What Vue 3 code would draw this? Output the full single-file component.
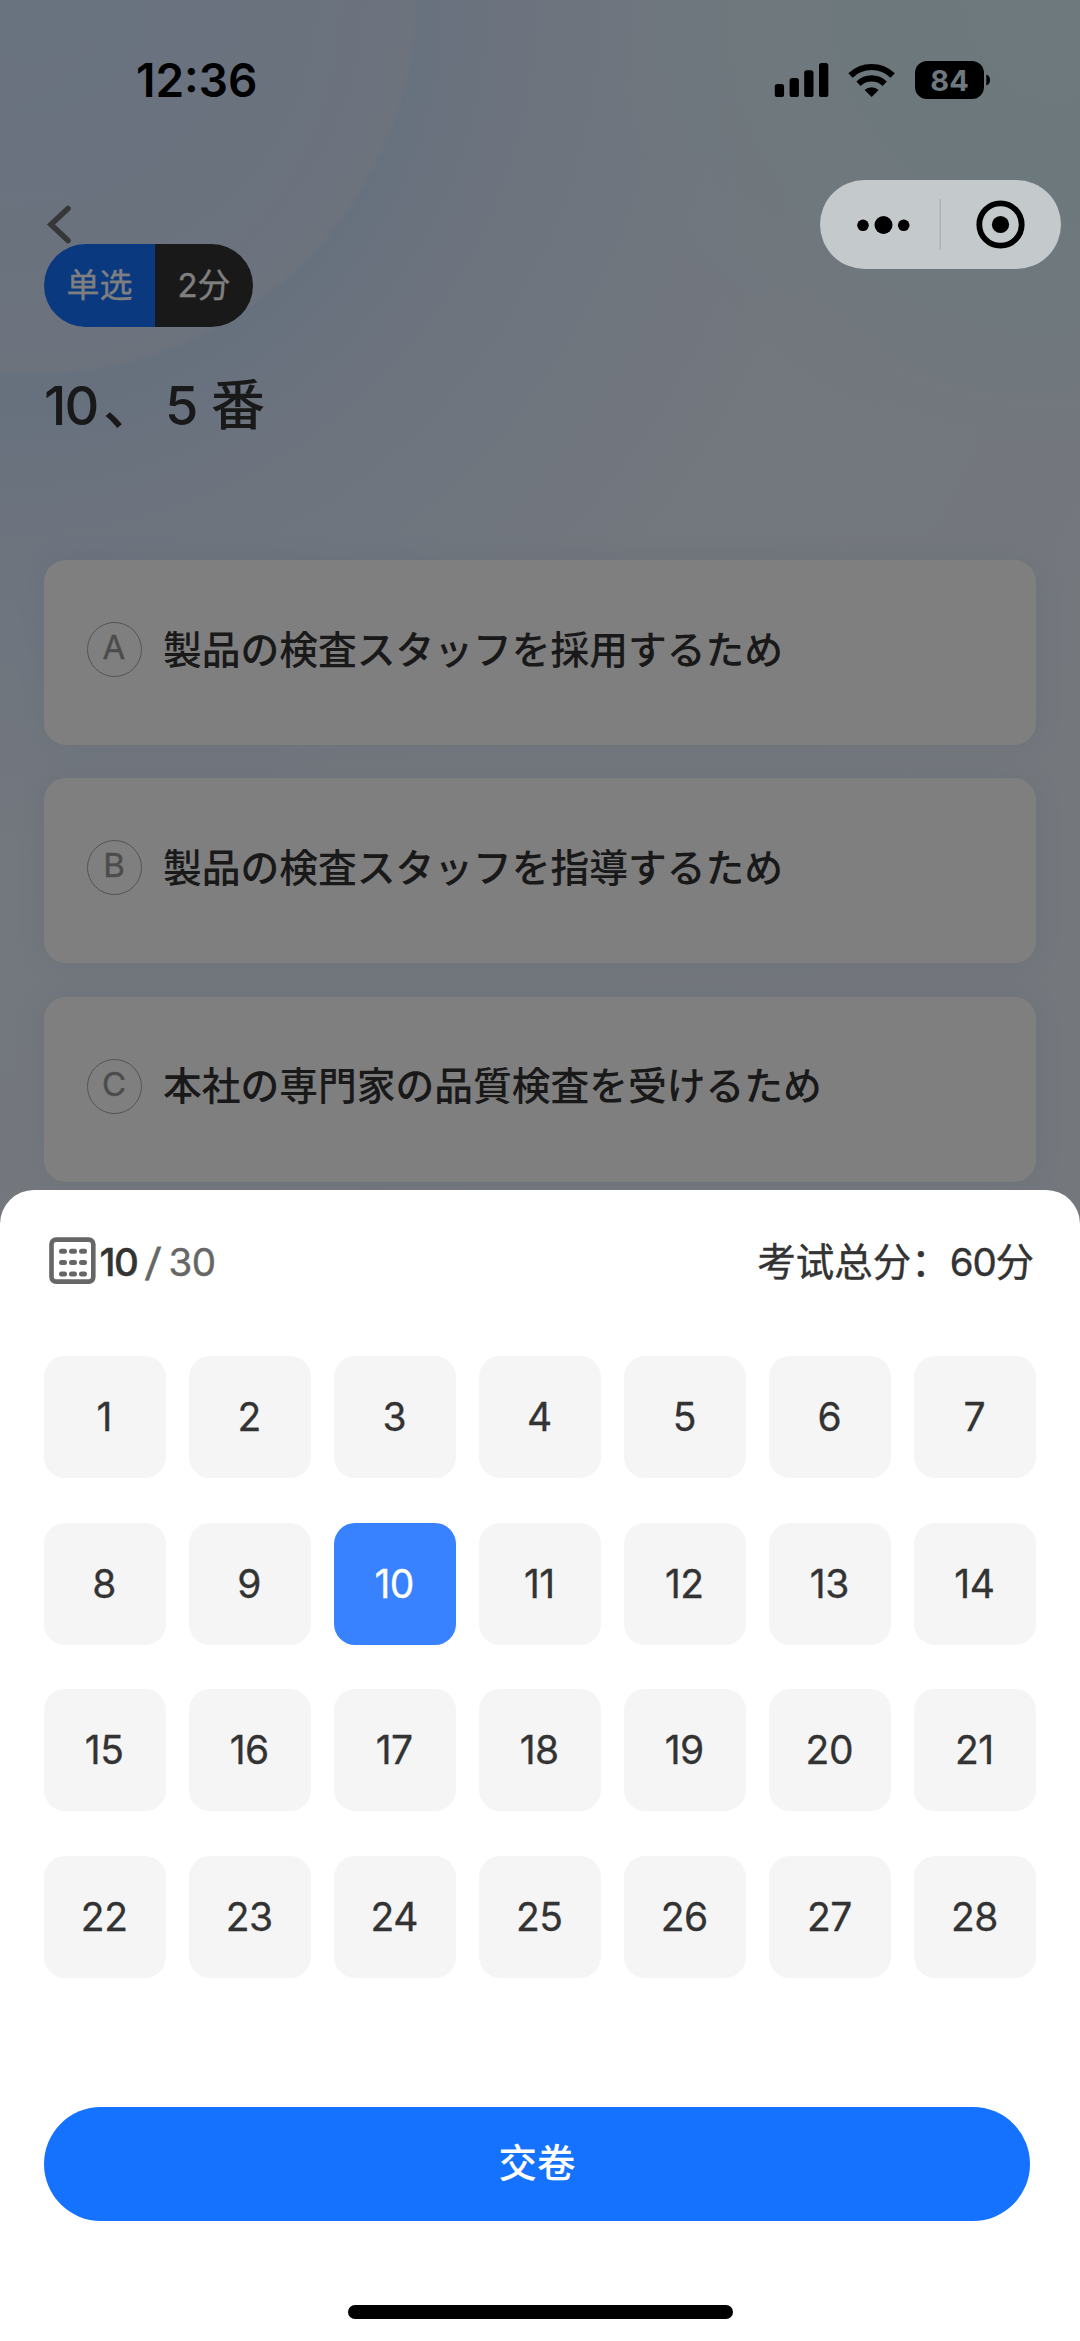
<script setup>
const options = [
  { key: 'A', text: '製品の検査スタッフを採用するため' },
  { key: 'B', text: '製品の検査スタッフを指導するため' },
  { key: 'C', text: '本社の専門家の品質検査を受けるため' },
]
const current = 10
const total = 30
const cells = Array.from({ length: 28 }, (_, i) => i + 1)
const dotRows = [15.3, 26.5, 38]
const dotCols = [14, 24, 34]
</script>

<template>
  <div class="screen">
    <main class="page">
      <div class="nav">
        <svg class="back" width="30" height="44" viewBox="0 0 30 44">
          <path d="M24 8.5 L7 24.5 L24 40.5" fill="none" stroke="#6f6f6f" stroke-width="5.6" stroke-linecap="round" stroke-linejoin="miter" />
        </svg>
      </div>
      <div class="tag">
        <span class="tag-type">单选</span>
        <span class="tag-score">2分</span>
      </div>
      <h1 class="title"><span class="n10">10</span><span class="comma">、</span><span class="n5">5</span><span>番</span></h1>
      <ul class="options">
        <li v-for="o in options" :key="o.key" class="option">
          <span class="letter">{{ o.key }}</span>
          <span class="option-text">{{ o.text }}</span>
        </li>
      </ul>
    </main>

    <div class="mask"></div>

    <header class="status">
      <span class="time">12:36</span>
      <svg class="indicators" width="220" height="40" viewBox="0 0 220 40">
        <rect x="4.8" y="24" width="9.3" height="13" rx="2.6" />
        <rect x="19.6" y="18" width="9.3" height="19" rx="2.6" />
        <rect x="34.2" y="10.3" width="9.3" height="26.7" rx="2.6" />
        <rect x="49" y="3" width="9.3" height="34" rx="2.6" />
        <path d="M101.600 37 L94.600 30 A10.500 10.500 0 0 1 108.600 30 Z" />
        <path d="M88.500 23.700 A19 19 0 0 1 114.700 23.700" fill="none" stroke="#000" stroke-width="6.200" />
        <path d="M80.500 15.500 A30.500 30.500 0 0 1 122.700 15.500" fill="none" stroke="#000" stroke-width="6.200" />
        <rect x="145" y="1" width="69" height="38" rx="12" />
        <path d="M216.300 14.500 C219.800 15.800 220 19 220 20 C220 21 219.800 24.200 216.300 25.500 Z" />
        <text x="179.500" y="30.600" text-anchor="middle" class="battery">84</text>
      </svg>
    </header>

    <div class="capsule">
      <svg width="241" height="89" viewBox="0 0 241 89">
        <circle cx="43" cy="45.300" r="5.800" />
        <circle cx="63.500" cy="45" r="9" />
        <circle cx="83.700" cy="45.300" r="5.800" />
        <rect x="119.700" y="19" width="1" height="51" fill="#a3a9ac" />
        <circle cx="180.500" cy="44.500" r="21.200" fill="none" stroke="#000" stroke-width="5.800" />
        <circle cx="180.500" cy="44.500" r="8.600" />
      </svg>
    </div>

    <section class="sheet">
      <div class="sheet-head">
        <div class="progress">
          <svg width="47" height="48" viewBox="0 0 47 48">
            <rect x="2.500" y="2.600" width="41.800" height="42" rx="4.500" fill="none" stroke="#666" stroke-width="4.600" />
            <template v-for="y in dotRows" :key="y">
              <rect v-for="x in dotCols" :key="x" :x="x - 4" :y="y - 3.5" width="8" height="5" rx="2.5" fill="#666" />
            </template>
          </svg>
          <span class="now">{{ current }}</span><span class="slash">/</span><span class="all">{{ total }}</span>
        </div>
        <div class="sum">考试总分：<span class="points">60</span>分</div>
      </div>
      <div class="grid">
        <span v-for="n in cells" :key="n" class="cell" :class="{ active: n === current }">{{ n }}</span>
      </div>
      <div class="submit">交卷</div>
      <div class="home"></div>
    </section>
  </div>
</template>

<style>
body {
  margin: 0;
}
</style>

<style scoped>
.screen {
  position: relative;
  width: 1080px;
  height: 2341px;
  overflow: hidden;
  display: flex;
  flex-direction: column;
  justify-content: flex-end;
  font-family: Inter, "Noto Sans CJK SC", sans-serif;
  color: #333;
}
.page {
  position: absolute;
  inset: 0;
  box-sizing: border-box;
  padding: 200px 44px 0;
  background:
    radial-gradient(circle at 34px -10px, rgba(224, 234, 252, 0) 0, rgba(224, 234, 252, 0.35) 280px, rgba(225, 233, 250, 0.6) 381px, transparent 385px),
    radial-gradient(circle at 1060px 0, #dcf2fa 0, #dbf1fa 200px, rgba(219, 241, 250, 0.85) 290px, rgba(226, 238, 252, 0) 460px),
    radial-gradient(circle at 0 0, #d2e5fe 0, #cfe2fd 410px, #d9e7fd 520px, #e0ecfd 680px, #e6eefc 850px, #e8f0fb 1300px);
}
.nav {
  height: 44px;
}
.back {
  display: block;
}
.tag {
  width: 209px;
  height: 83px;
  border-radius: 42px;
  overflow: hidden;
  display: flex;
  line-height: 82px;
  text-align: center;
  font-size: 33px;
  color: #fff;
  -webkit-text-stroke: 0.3px;
}
.tag-type {
  width: 111px;
  background: #1472ff;
}
.tag-score {
  flex: 1;
  background: #333;
}
.title {
  margin: 39px 0 0;
  height: 80px;
  line-height: 80px;
  display: flex;
  font-size: 54px;
  font-weight: 500;
  white-space: nowrap;
}
.n10 {
  width: 59px;
  letter-spacing: -2px;
}
.comma {
  width: 62px;
}
.n5 {
  width: 46px;
}
.options {
  list-style: none;
  margin: 114px 0 0;
  padding: 0;
  display: flex;
  flex-direction: column;
  gap: 33.3px;
}
.option {
  height: 185px;
  box-sizing: border-box;
  padding: 0 43px 6px 42.5px;
  border-radius: 22px;
  background: #fff;
  box-shadow: 0 0 28px rgba(100, 130, 150, 0.1);
  display: flex;
  align-items: center;
  gap: 21.5px;
}
.letter {
  box-sizing: border-box;
  width: 55px;
  height: 55px;
  border: 1.4px solid #a6a6a6;
  border-radius: 50%;
  text-align: center;
  line-height: 49px;
  font-size: 33px;
  color: #999;
  -webkit-text-stroke: 0.4px;
}
.option-text {
  margin-top: -6px;
  font-family: "Noto Sans CJK JP", sans-serif;
  font-size: 38.75px;
  font-weight: 500;
}
.mask {
  position: absolute;
  inset: 0;
  background: rgba(0, 0, 0, 0.5);
}
.status {
  position: absolute;
  top: 60px;
  left: 136px;
  width: 855px;
  height: 40px;
  display: flex;
  justify-content: space-between;
  align-items: center;
  color: #000;
}
.time {
  font-size: 46px;
  font-weight: 600;
}
.indicators {
  margin-right: 1px;
}
.battery {
  font-size: 29px;
  font-weight: 700;
  fill: #6d797e;
}
.capsule {
  position: absolute;
  left: 820px;
  top: 180px;
  width: 241px;
  height: 89px;
  border-radius: 45px;
  background: #c4c9cc;
}
.sheet {
  position: relative;
  box-sizing: border-box;
  height: 1151.5px;
  padding: 0 44px;
  border-radius: 34px 34px 0 0;
  background: #fff;
}
.sheet-head {
  height: 166.5px;
  box-sizing: border-box;
  padding: 47px 2px 0 4.500px;
  display: flex;
  justify-content: space-between;
  align-items: flex-start;
  font-size: 38.5px;
  line-height: 50px;
  -webkit-text-stroke: 0.4px;
}
.progress {
  display: flex;
  color: #666;
}
.now {
  margin-left: 4px;
  width: 45px;
  letter-spacing: -1.5px;
  font-weight: 500;
  color: #333;
}
.slash {
  width: 24px;
  transform: scaleX(1.15) skewX(-3deg);
  transform-origin: left;
}
.all {
  letter-spacing: -0.5px;
}
.sum {
  white-space: nowrap;
}
.points {
  letter-spacing: -1.2px;
}
.grid {
  display: grid;
  grid-template-columns: repeat(7, 121.800px);
  justify-content: space-between;
  row-gap: 44.5px;
}
.cell {
  box-sizing: border-box;
  height: 122px;
  padding-right: 1.5px;
  border-radius: 21px;
  background: #f5f5f5;
  text-align: center;
  line-height: 122px;
  font-size: 39px;
  letter-spacing: -0.5px;
  -webkit-text-stroke: 0.3px;
}
.active {
  background: #3882ff;
  color: #fff;
}
.submit {
  width: 986px;
  height: 114px;
  margin-top: 129px;
  border-radius: 57px;
  background: #1472ff;
  color: #fff;
  text-align: center;
  line-height: 112px;
  font-size: 38.5px;
  font-weight: 500;
}
.home {
  width: 385px;
  height: 14px;
  margin: 84px auto 0;
  border-radius: 7px;
  background: #000;
}
</style>
